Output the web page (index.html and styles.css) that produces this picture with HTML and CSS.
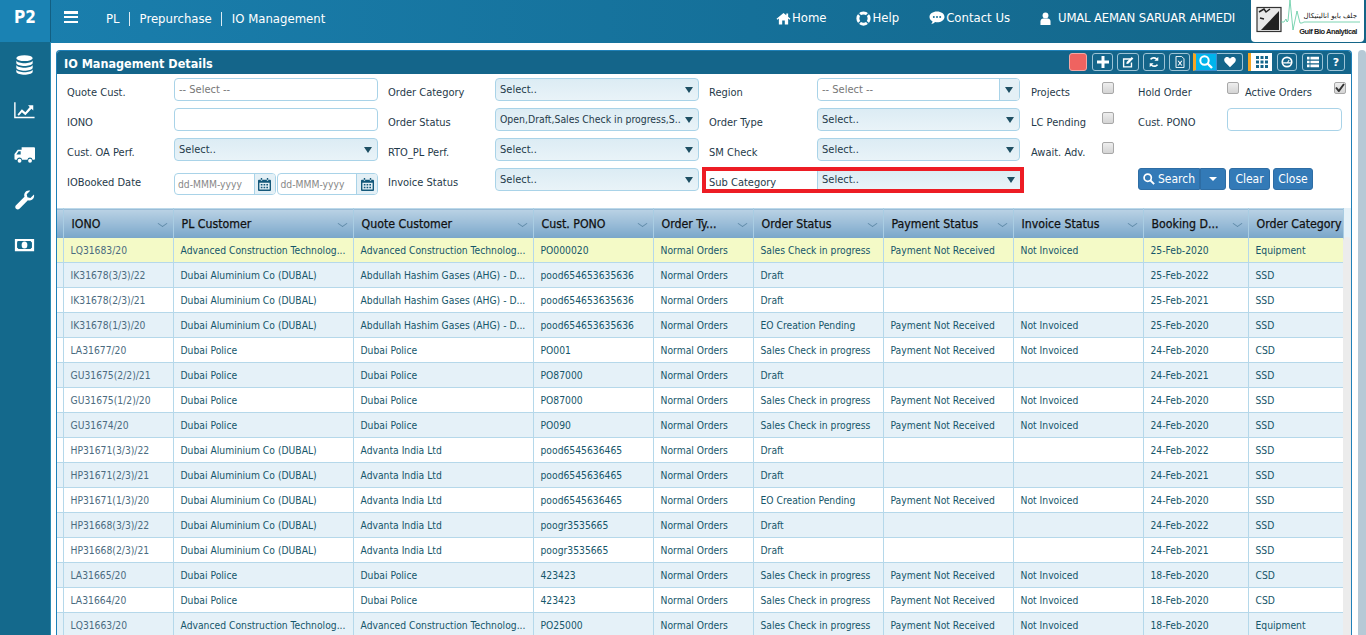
FILE: index.html
```html
<!DOCTYPE html>
<html lang="en">
<head>
<meta charset="utf-8">
<title>IO Management</title>
<link rel="stylesheet" href="styles.css">
</head>
<body>
<header class="topbar">
  <div class="brand">P2</div>
  <button class="burger" aria-label="Menu"><span></span><span></span><span></span></button>
  <nav class="crumbs"><span>PL</span><i></i><span>Prepurchase</span><i></i><span>IO Management</span></nav>
  <nav class="links">
    <a class="lk lk-home"><svg viewBox="0 0 16 14"><path d="M8 1 0.5 7.400l.9 1L3 7v6.500h3.600V9.200h2.800v4.300H13V7l1.600 1.400.9-1L13 5.200V1.600h-2v1.900z"/></svg>Home</a>
    <a class="lk lk-help"><svg viewBox="0 0 16 16"><circle cx="8" cy="8" r="6" fill="none" stroke="#fff" stroke-width="3.200"/><path d="M3 1.800 6 5 5 6 1.800 3zM13 1.800 10 5l1 1 3.200-3zM3 14.200 6 11l-1-1-3.200 3zM13 14.200 10 11l1-1 3.200 3z" fill="#14709a"/></svg>Help</a>
    <a class="lk lk-contact"><svg viewBox="0 0 16 14"><path d="M8 .5c4.200 0 7.500 2.400 7.500 5.400S12.200 11.300 8 11.300c-.7 0-1.300 0-1.900-.2C5 12.200 3.500 13 2 13.200c.9-.8 1.400-1.800 1.500-3C1.600 9.300.5 7.700.5 5.900.5 2.900 3.800.500 8 .500z"/><circle cx="4.800" cy="5.900" r="1" fill="#14709a"/><circle cx="8" cy="5.900" r="1" fill="#14709a"/><circle cx="11.200" cy="5.900" r="1" fill="#14709a"/></svg>Contact Us</a>
    <a class="lk lk-user"><svg viewBox="0 0 12 14"><circle cx="6" cy="3.600" r="3.200"/><path d="M.5 14V10.500C.5 8.300 2 7 3.500 7h5c1.500 0 3 1.300 3 3.500V14z"/></svg><span class="uname">UMAL AEMAN SARUAR AHMEDI</span></a>
  </nav>
  <div class="logo">
    <svg class="logo-mark" viewBox="0 0 113 42">
      <rect x="6" y="7.500" width="24" height="24" fill="#e8e8e8" stroke="#333" stroke-width="1.200"/>
      <path d="M10 30 28 11v19z" fill="#222"/>
      <path d="M8 12l5-3 2 3 4-3M9 18l4 1M21 23l5 3" stroke="#222" stroke-width="1.500" fill="none"/>
      <path d="M30 22h3l2-3 1 3 1-1 2-21 3 30 4-19 3 12h2l2-1h56" stroke="#5cc9a0" stroke-width=".8" fill="none"/>
    </svg>
    <span class="logo-ar">جلف بايو اناليتيكال</span>
    <span class="logo-en">Gulf Bio Analytical</span>
  </div>
</header>

<div class="shell">
  <aside class="side">
    <svg viewBox="0 0 20 22"><ellipse cx="10" cy="3.500" rx="9" ry="3.200"/><path d="M1 6c1 2 5 3 9 3s8-1 9-3v3.200c-1 2-5 3-9 3s-8-1-9-3zM1 11c1 2 5 3 9 3s8-1 9-3v3.200c-1 2-5 3-9 3s-8-1-9-3zM1 16c1 2 5 3 9 3s8-1 9-3v2.700c-1 2-5 3-9 3s-8-1-9-3z"/></svg>
    <svg viewBox="0 0 24 20"><path d="M1 1v17.500h22.500" fill="none" stroke="#fff" stroke-width="1.600"/><path d="M4 15l5-6 4 3.500 5-6-2-2h6v6l-2-2-7 7.500-4-3.500-3.500 4z"/></svg>
    <svg viewBox="0 0 22 18"><path d="M8 1h13a1 1 0 0 1 1 1v11a1 1 0 0 1-1 1h-1.500a2.800 2.800 0 0 0-5.500 0H8.500a2.800 2.800 0 0 0-5.500 0H1.500a1 1 0 0 1-1-1V8l3.500-4.500H8zM2.500 8.500H7v-3.500H4.800z"/><circle cx="5.800" cy="15" r="2"/><circle cx="16.800" cy="15" r="2"/></svg>
    <svg viewBox="0 0 20 20"><path d="M19.500 4.500c.5 2.200-.2 4.200-2 5.300-1.300.8-2.800.9-4.100.4L5 18.700c-1 1-2.500 1-3.500 0s-1-2.500 0-3.500l8.500-8.400c-.5-1.300-.4-2.800.4-4.100C11.500.9 13.500.2 15.700.7l-3.500 3.500.7 3 3 .7z"/></svg>
    <svg viewBox="0 0 24 16"><path fill-rule="evenodd" d="M1 1h22v14H1zM4 3.500A2 2 0 0 1 3.500 5v6A2 2 0 0 1 5 12.500h14a2 2 0 0 1 1.500-1.500V5A2 2 0 0 1 19 3.500z"/><ellipse cx="12" cy="8" rx="3.300" ry="4"/></svg>
  </aside>

  <main class="panel">
    <div class="panel-head">
      <h1>IO Management Details</h1>
      <div class="tools">
        <span class="tb tb-red"></span>
        <span class="tb tb-plus"><svg viewBox="0 0 12 12"><path d="M4.500 0h3v4.500H12v3H7.500V12h-3V7.500H0v-3h4.500z"/></svg></span>
        <span class="tb tb-w22"><svg viewBox="0 0 13 13"><path d="M1 2.500h8v1.500H2.500v7h7V7H11v5.500H1z"/><path d="M5 6.500 10.500 1l1.800 1.800L6.800 8.300 4.700 8.700z"/></svg></span>
        <span class="tb tb-w22"><svg viewBox="0 0 14 14"><path d="M12 1v4.500H7.500l1.700-1.700C7.500 2.600 5 3 3.800 4.500L2.200 3.500C4 .8 7.800.2 10.500 2.500zM2 13V8.500h4.500l-1.700 1.700c1.700 1.200 4.200.8 5.400-.7l1.600 1c-1.800 2.700-5.600 3.300-8.300 1z"/></svg></span>
        <span class="tb tb-w21"><svg viewBox="0 0 12 15"><path d="M1 .5h7l3 3v11H1z" fill="none" stroke="#fff" stroke-width="1.200"/><path d="M3 6l1.500 0L6 8l1.500-2H9L6.800 9 9 12H7.500L6 10l-1.500 2H3l2.200-3z"/></svg></span>
        <div class="tgroup">
          <span class="tb tb-on"><svg viewBox="0 0 14 14"><circle cx="5.500" cy="5.500" r="4.200" fill="none" stroke="#fff" stroke-width="2"/><path d="M8.500 8.500 13 13" stroke="#fff" stroke-width="2.400"/></svg></span>
          <span class="tb tb-heart"><svg viewBox="0 0 14 13"><path d="M7 12.500 1.200 6.700C-.4 5 .1 2.300 1.700 1.300 3.500.2 5.700.8 7 2.600 8.300.8 10.500.2 12.300 1.300c1.600 1 2.100 3.700.5 5.400z"/></svg></span>
        </div>
        <span class="tb tb-grid"><svg viewBox="0 0 12 12"><path d="M0 0h3v3H0zM4.500 0h3v3h-3zM9 0h3v3H9zM0 4.500h3v3H0zM4.500 4.500h3v3h-3zM9 4.500h3v3H9zM0 9h3v3H0zM4.500 9h3v3h-3zM9 9h3v3H9z"/></svg></span>
        <span class="tb tb-dash"><svg viewBox="0 0 14 14"><circle cx="7" cy="7" r="5.500" fill="none" stroke="#fff" stroke-width="2"/><path d="M2.500 7.300h9v1.500h-9zM7 7.500l2-3 1 .6-2 3z"/></svg></span>
        <span class="tb tb-list"><svg viewBox="0 0 14 12"><path d="M0 0h3v3H0zM4 0h10v3H4zM0 4.500h3v3H0zM4 4.500h10v3H4zM0 9h3v3H0zM4 9h10v3H4z"/></svg></span>
        <span class="tb tb-q">?</span>
      </div>
    </div>

    <form class="filters">
      <label class="lb">Quote Cust.</label>
      <div class="inp ph">-- Select --</div>
      <label class="lb lb-g">Order Category</label>
      <div class="sel">Select..</div>
      <label class="lb lb-g">Region</label>
      <div class="inp ph combo">-- Select --<span class="combo-btn"></span></div>
      <label class="lb lb-p">Projects</label>
      <span class="cb"></span>
      <label class="lb">Hold Order</label>
      <span class="cb"></span>
      <label class="lb">Active Orders</label>
      <span class="cb cb-on"><svg viewBox="0 0 10 9"><path d="M1 4.500 3.800 8 9 1" fill="none" stroke="#333" stroke-width="2"/></svg></span>

      <label class="lb">IONO</label>
      <div class="inp"></div>
      <label class="lb lb-g">Order Status</label>
      <div class="sel sel-long">Open,Draft,Sales Check in progress,S..</div>
      <label class="lb lb-g">Order Type</label>
      <div class="sel">Select..</div>
      <label class="lb lb-p">LC Pending</label>
      <span class="cb"></span>
      <label class="lb">Cust. PONO</label>
      <div class="inp inp-pono"></div>

      <label class="lb">Cust. OA Perf.</label>
      <div class="sel">Select..</div>
      <label class="lb lb-g">RTO_PL Perf.</label>
      <div class="sel">Select..</div>
      <label class="lb lb-g">SM Check</label>
      <div class="sel">Select..</div>
      <label class="lb lb-p">Await. Adv.</label>
      <span class="cb"></span>
      <span class="blank"></span>

      <label class="lb">IOBooked Date</label>
      <div class="dates">
        <div class="date"><span>dd-MMM-yyyy</span><b><svg viewBox="0 0 14 14"><path fill-rule="evenodd" d="M1 2h12a1 1 0 0 1 1 1v10a1 1 0 0 1-1 1H1a1 1 0 0 1-1-1V3a1 1 0 0 1 1-1zM1.500 5v7.500h11V5zM3 0h1.500v3H3zM9.500 0H11v3H9.500z"/><path d="M3 6.500h1.800v1.500H3zM6 6.500h1.800v1.500H6zM9 6.500h1.800v1.500H9zM3 9.500h1.800V11H3zM6 9.500h1.800V11H6zM9 9.500h1.800V11H9z"/></svg></b></div>
        <div class="date"><span>dd-MMM-yyyy</span><b><svg viewBox="0 0 14 14"><path fill-rule="evenodd" d="M1 2h12a1 1 0 0 1 1 1v10a1 1 0 0 1-1 1H1a1 1 0 0 1-1-1V3a1 1 0 0 1 1-1zM1.500 5v7.500h11V5zM3 0h1.500v3H3zM9.500 0H11v3H9.500z"/><path d="M3 6.500h1.800v1.500H3zM6 6.500h1.800v1.500H6zM9 6.500h1.800v1.500H9zM3 9.500h1.800V11H3zM6 9.500h1.800V11H6zM9 9.500h1.800V11H9z"/></svg></b></div>
      </div>
      <label class="lb lb-g">Invoice Status</label>
      <div class="sel">Select..</div>
      <div class="hl"><label class="hl-lb">Sub Category</label><div class="sel hl-sel">Select..</div></div>
      <span class="blank2"></span>
      <div class="actions">
        <button type="button" class="btn btn-search"><svg viewBox="0 0 14 14"><circle cx="5.500" cy="5.500" r="4.200" fill="none" stroke="#fff" stroke-width="2"/><path d="M8.500 8.500 13 13" stroke="#fff" stroke-width="2.200"/></svg>Search</button><button type="button" class="btn btn-caret"><i></i></button>
        <button type="button" class="btn btn-clear">Clear</button>
        <button type="button" class="btn btn-close">Close</button>
      </div>
    </form>

    <div class="grid-wrap">
      <table class="grid">
        <colgroup><col class="c0"><col class="c1"><col class="c2"><col class="c3"><col class="c4"><col class="c5"><col class="c6"><col class="c7"><col class="c8"><col class="c9"><col class="c10"></colgroup>
        <thead><tr>
          <th></th>
          <th class="srt">IONO</th><th class="srt">PL Customer</th><th class="srt">Quote Customer</th><th class="srt">Cust. PONO</th><th class="srt">Order Ty...</th><th class="srt">Order Status</th><th class="srt">Payment Status</th><th class="srt">Invoice Status</th><th class="srt">Booking D...</th><th>Order Category</th>
        </tr></thead>
        <tbody>
          <tr class="on"><td></td><td class="id">LQ31683/20</td><td>Advanced Construction Technolog...</td><td>Advanced Construction Technolog...</td><td>PO000020</td><td>Normal Orders</td><td>Sales Check in progress</td><td>Payment Not Received</td><td>Not Invoiced</td><td>25-Feb-2020</td><td>Equipment</td></tr>
          <tr class="alt"><td></td><td class="id">IK31678(3/3)/22</td><td>Dubai Aluminium Co (DUBAL)</td><td>Abdullah Hashim Gases (AHG) - D...</td><td>pood654653635636</td><td>Normal Orders</td><td>Draft</td><td></td><td></td><td>25-Feb-2022</td><td>SSD</td></tr>
          <tr><td></td><td class="id">IK31678(2/3)/21</td><td>Dubai Aluminium Co (DUBAL)</td><td>Abdullah Hashim Gases (AHG) - D...</td><td>pood654653635636</td><td>Normal Orders</td><td>Draft</td><td></td><td></td><td>25-Feb-2021</td><td>SSD</td></tr>
          <tr class="alt"><td></td><td class="id">IK31678(1/3)/20</td><td>Dubai Aluminium Co (DUBAL)</td><td>Abdullah Hashim Gases (AHG) - D...</td><td>pood654653635636</td><td>Normal Orders</td><td>EO Creation Pending</td><td>Payment Not Received</td><td>Not Invoiced</td><td>25-Feb-2020</td><td>SSD</td></tr>
          <tr><td></td><td class="id">LA31677/20</td><td>Dubai Police</td><td>Dubai Police</td><td>PO001</td><td>Normal Orders</td><td>Sales Check in progress</td><td>Payment Not Received</td><td>Not Invoiced</td><td>24-Feb-2020</td><td>CSD</td></tr>
          <tr class="alt"><td></td><td class="id">GU31675(2/2)/21</td><td>Dubai Police</td><td>Dubai Police</td><td>PO87000</td><td>Normal Orders</td><td>Draft</td><td></td><td></td><td>24-Feb-2021</td><td>SSD</td></tr>
          <tr><td></td><td class="id">GU31675(1/2)/20</td><td>Dubai Police</td><td>Dubai Police</td><td>PO87000</td><td>Normal Orders</td><td>Sales Check in progress</td><td>Payment Not Received</td><td>Not Invoiced</td><td>24-Feb-2020</td><td>SSD</td></tr>
          <tr class="alt"><td></td><td class="id">GU31674/20</td><td>Dubai Police</td><td>Dubai Police</td><td>PO090</td><td>Normal Orders</td><td>Sales Check in progress</td><td>Payment Not Received</td><td>Not Invoiced</td><td>24-Feb-2020</td><td>SSD</td></tr>
          <tr><td></td><td class="id">HP31671(3/3)/22</td><td>Dubai Aluminium Co (DUBAL)</td><td>Advanta India Ltd</td><td>pood6545636465</td><td>Normal Orders</td><td>Draft</td><td></td><td></td><td>24-Feb-2022</td><td>SSD</td></tr>
          <tr class="alt"><td></td><td class="id">HP31671(2/3)/21</td><td>Dubai Aluminium Co (DUBAL)</td><td>Advanta India Ltd</td><td>pood6545636465</td><td>Normal Orders</td><td>Draft</td><td></td><td></td><td>24-Feb-2021</td><td>SSD</td></tr>
          <tr><td></td><td class="id">HP31671(1/3)/20</td><td>Dubai Aluminium Co (DUBAL)</td><td>Advanta India Ltd</td><td>pood6545636465</td><td>Normal Orders</td><td>EO Creation Pending</td><td>Payment Not Received</td><td>Not Invoiced</td><td>24-Feb-2020</td><td>SSD</td></tr>
          <tr class="alt"><td></td><td class="id">HP31668(3/3)/22</td><td>Dubai Aluminium Co (DUBAL)</td><td>Advanta India Ltd</td><td>poogr3535665</td><td>Normal Orders</td><td>Draft</td><td></td><td></td><td>24-Feb-2022</td><td>SSD</td></tr>
          <tr><td></td><td class="id">HP31668(2/3)/21</td><td>Dubai Aluminium Co (DUBAL)</td><td>Advanta India Ltd</td><td>poogr3535665</td><td>Normal Orders</td><td>Draft</td><td></td><td></td><td>24-Feb-2021</td><td>SSD</td></tr>
          <tr class="alt"><td></td><td class="id">LA31665/20</td><td>Dubai Police</td><td>Dubai Police</td><td>423423</td><td>Normal Orders</td><td>Sales Check in progress</td><td>Payment Not Received</td><td>Not Invoiced</td><td>18-Feb-2020</td><td>CSD</td></tr>
          <tr><td></td><td class="id">LA31664/20</td><td>Dubai Police</td><td>Dubai Police</td><td>423423</td><td>Normal Orders</td><td>Sales Check in progress</td><td>Payment Not Received</td><td>Not Invoiced</td><td>18-Feb-2020</td><td>CSD</td></tr>
          <tr class="alt"><td></td><td class="id">LQ31663/20</td><td>Advanced Construction Technolog...</td><td>Advanced Construction Technolog...</td><td>PO25000</td><td>Normal Orders</td><td>Sales Check in progress</td><td>Payment Not Received</td><td>Not Invoiced</td><td>18-Feb-2020</td><td>Equipment</td></tr>
        </tbody>
      </table>
      <div class="vscroll"></div>
    </div>
  </main>
  <div class="page-scroll"></div>
</div>
</body>
</html>
```

FILE: styles.css
```css
* { box-sizing: border-box; }
html, body { margin: 0; height: 635px; overflow: hidden; }
body {
  font-family: "DejaVu Sans Condensed", "DejaVu Sans", sans-serif;
  font-stretch: condensed;
  font-size: 11px;
  color: #1f3a4a;
  background: #fff;
  display: flex;
  flex-direction: column;
}

/* top bar */
.topbar {
  height: 43px;
  flex: none;
  display: flex;
  align-items: flex-start;
  color: #fff;
  background: linear-gradient(90deg, #1a7fae 0%, #157099 55%, #146587 100%);
}
.brand {
  width: 51px;
  height: 42px;
  background: #1a82b3;
  border-right: 1px solid #125f82;
  font: bold 17px/35px "DejaVu Sans Condensed", "DejaVu Sans", sans-serif;
  text-align: center;
}
.burger {
  width: 14px;
  height: 12px;
  margin: 11px 0 0 13px;
  padding: 0;
  border: 0;
  background: none;
  display: flex;
  flex-direction: column;
  justify-content: space-between;
}
.burger span { display: block; height: 2.500px; background: #fff; }
.crumbs {
  display: flex;
  align-items: center;
  margin: 11px 0 0 28px;
  font-size: 13px;
  line-height: 15px;
}
.crumbs i { width: 1px; height: 14px; background: #dcebf3; margin: 0 10px 0 9px; }
.links {
  display: flex;
  align-items: center;
  margin: 10px 0 0 auto;
  font-size: 13px;
  line-height: 16px;
}
.lk { display: flex; align-items: center; }
.lk svg { fill: #fff; margin-right: 1px; }
.lk-home svg { width: 15px; height: 13px; }
.lk-help { margin-left: 30px; }
.lk-help svg { width: 15px; height: 15px; }
.lk-contact { margin-left: 30px; }
.lk-contact svg { width: 16px; height: 14px; }
.lk-user { margin-left: 30px; }
.lk-user svg { width: 11px; height: 13px; margin-right: 7px; }
.uname { letter-spacing: -.2px; }
.logo {
  position: relative;
  width: 113px;
  height: 42px;
  margin: 0 2px 0 16px;
  background: #fff;
  border-radius: 0 0 4px 4px;
  color: #222;
}
.logo-mark { position: absolute; left: 0; top: 0; width: 113px; height: 42px; }
.logo-ar {
  position: absolute; right: 7px; top: 12px;
  font: 7px/9px "DejaVu Sans", sans-serif;
  background: #fff;
}
.logo-en {
  position: absolute; right: 7px; top: 27px;
  font: bold 7.500px/9px "Liberation Sans", sans-serif;
  letter-spacing: -.45px;
}

/* shell */
.shell { flex: 1; display: flex; min-height: 0; position: relative; }
.side {
  width: 51px;
  flex: none;
  margin-top: -1px;
  background: #14698c;
  border-right: 1px solid #2a88b0;
  display: flex;
  flex-direction: column;
  align-items: center;
  padding-top: 13px;
  gap: 25px;
}
.side svg { width: 22px; height: 20px; fill: #fff; display: block; padding-right: 1px; }

/* panel */
.panel {
  width: 1296px;
  flex: none;
  margin: 7px 0 0 5px;
  border: 1px solid #1f80b8;
  border-bottom: 0;
  border-radius: 4px 4px 0 0;
  background: #fff;
  overflow: hidden;
}
.panel-head {
  height: 23px;
  background: #14658a;
  display: flex;
  align-items: center;
  justify-content: space-between;
  padding: 0 6px 0 7px;
}
.panel-head h1 {
  margin: 1px 0 0;
  color: #fff;
  font-size: 12.500px;
  font-weight: bold;
  font-stretch: condensed;
}
.tools { display: flex; align-items: center; margin-top: -1px; }
.tb {
  display: flex;
  align-items: center;
  justify-content: center;
  height: 18px;
  border: 1px solid #9dc3d6;
  border-radius: 3px;
  margin-left: 4px;
  color: #fff;
}
.tb svg { fill: #fff; width: 12px; height: 12px; }
.tb-red { width: 18px; background: #ef6360; margin-left: 0; border-color: #f4a7a5; }
.tb-plus { width: 21px; margin-left: 5px; }
.tb-w21 { width: 21px; }
.tb-w22 { width: 22px; }
.tb-dash { width: 20px; margin-left: 5px; }
.tb-list { width: 21px; margin-left: 5px; }
.tb-q { width: 18px; font: bold 11px "DejaVu Sans", sans-serif; }
.tgroup { display: flex; margin-left: 3px; }
.tgroup .tb { margin-left: 0; }
.tb-on {
  width: 24px;
  background: #00b4ec;
  border: 1px solid #3b8fd0;
  border-left: 3px solid #f5a623;
  border-radius: 0;
}
.tb-on svg { width: 14px; height: 14px; }
.tb-heart { width: 26px; border-left: 0; border-radius: 0 3px 3px 0; }
.tb-grid {
  width: 24px;
  margin-left: 5px;
  background: #fff;
  border: 0;
  border-left: 3px solid #f5a623;
  border-radius: 0;
}
.tb-grid svg { fill: #14658a; }

/* filters */
.filters {
  display: grid;
  grid-template-columns: 107px 204px 117px 204px 118px 203px 82px 36px 89px 18px 89px 18px;
  grid-auto-rows: 30px;
  padding: 4px 0 10px 10px;
  height: 134px;
}
.lb {
  padding-top: 8px;
  line-height: 14px;
  color: #1f3a4a;
  white-space: nowrap;
}
.lb-g { padding-left: 10px; }
.lb-p { padding-left: 11px; }
.inp, .sel {
  height: 23px;
  border: 1px solid #a9d3e8;
  border-radius: 4px;
  padding-left: 4px;
  color: #1f3a4a;
  position: relative;
  white-space: nowrap;
  overflow: hidden;
}
.inp { background: #fff; }
.ph { color: #777; line-height: 22px; }
.sel {
  background: linear-gradient(#dcecf4, #e9f3f8);
  line-height: 21px;
  padding-right: 16px;
}
.sel-long { font-size: 10.400px; }
.sel::after, .combo-btn::after {
  content: "";
  position: absolute;
  top: 8px;
  right: 5px;
  border: 4px solid transparent;
  border-top: 6px solid #1e4f63;
  border-bottom: 0;
}
.combo-btn {
  position: absolute;
  right: 0; top: 0; bottom: 0;
  width: 20px;
  background: #e4f0f6;
  border-left: 1px solid #a9d3e8;
}
.combo-btn::after { right: 6px; }
.inp-pono { grid-column: span 3; width: 115px; }
.cb {
  width: 12px;
  height: 12px;
  margin-top: 4px;
  border: 1px solid #a8a8a8;
  border-radius: 2px;
  background: linear-gradient(#eee, #d4d4d4);
  position: relative;
}
.cb-on svg { position: absolute; left: 0; top: 0; width: 10px; height: 9px; }
.blank { grid-column: span 4; }
.blank2 { grid-column: span 2; }
.dates { display: flex; gap: 1px; margin-top: 5px; height: 22px; }
.date {
  flex: 1;
  height: 22px;
  display: flex;
  border: 1px solid #a9d3e8;
  border-radius: 4px;
  overflow: hidden;
  color: #888;
  font-size: 10.250px;
}
.date span { flex: 1; padding-left: 3px; line-height: 21px; white-space: nowrap; }
.date b {
  width: 21px;
  flex: none;
  background: #e4f0f6;
  border-left: 1px solid #a9d3e8;
  display: flex;
  align-items: center;
  justify-content: center;
}
.date svg { width: 13px; height: 13px; fill: #14587a; }
.hl {
  grid-column: span 2;
  display: flex;
  height: 18px;
  margin: 3px 0 0 7px;
  padding-left: 3px;
  outline: 4px solid #ed1c24;
  background: #fff;
}
.hl-lb { width: 108px; padding-top: 5px; flex: none; line-height: 14px; color: #1f3a4a; }
.hl-sel { flex: 1; height: 18px; border: 0; border-left: 1px solid #a9d3e8; border-radius: 0; line-height: 17px; }
.hl-sel::after { top: 6px; }
.actions { grid-column: span 4; display: flex; height: 22px; color: #fff; }
.btn {
  height: 22px;
  padding: 0;
  border: 1px solid #2e6da4;
  border-radius: 3px;
  background: #337ab7;
  color: #fff;
  font: inherit;
  font-size: 12px;
  font-stretch: condensed;
}
.btn-search {
  width: 62px;
  flex: none;
  border-radius: 3px 0 0 3px;
  display: flex;
  align-items: center;
  justify-content: center;
  gap: 3px;
}
.btn-search svg { width: 12px; height: 12px; }
.btn-caret { width: 26px; flex: none; border-radius: 0 3px 3px 0; display: flex; align-items: center; justify-content: center; }
.btn-caret i { border: 4px solid transparent; border-top: 4px solid #fff; border-bottom: 0; display: block; }
.btn-clear { width: 41px; flex: none; margin-left: 3px; }
.btn-close { width: 40px; flex: none; margin-left: 3px; }

/* data grid */
.grid-wrap {
  position: relative;
  height: 440px;
  overflow: hidden;
  background: #e5f1f8;
  width: 1294px;
}
.grid {
  width: 1286px;
  table-layout: fixed;
  border-collapse: collapse;
  font-size: 10.250px;
}
.c0 { width: 6px; }
.c1 { width: 110px; }
.c2 { width: 180px; }
.c3 { width: 180px; }
.c4 { width: 120px; }
.c5 { width: 100px; }
.c6 { width: 130px; }
.c7 { width: 130px; }
.c8 { width: 130px; }
.c9 { width: 105px; }
.c10 { width: 95px; }
.grid th {
  height: 29px;
  padding: 1px 0 0 8px;
  text-align: left;
  font-size: 12.250px;
  font-weight: normal;
  color: #111;
  -webkit-text-stroke: .25px #111;
  white-space: nowrap;
  overflow: hidden;
  background: linear-gradient(#bad2e5, #79a6c9);
  border-right: 1px solid #a9cde3;
  border-top: 1px solid #bcd9ea;
  position: relative;
}
.srt::after {
  content: "";
  position: absolute;
  right: 7px;
  top: 11px;
  width: 6px;
  height: 6px;
  border-right: 1px solid #5f8aa8;
  border-bottom: 1px solid #5f8aa8;
  transform: scaleY(.7) rotate(45deg);
}
.grid td {
  height: 25px;
  padding: 0 0 0 7px;
  white-space: nowrap;
  overflow: hidden;
  color: #15566a;
  background: #fff;
  border-right: 1px solid #b5d8ea;
  border-bottom: 1px solid #b5d8ea;
}
.grid td.id { color: #4b6b80; }
.grid tr.alt td { background: #e5f1f8; }
.grid tr.on td { background: #f4fac7; }
.vscroll {
  position: absolute;
  right: 0;
  top: 29px;
  bottom: 0;
  width: 8px;
  background: #ececec;
  border-radius: 4px 4px 0 0;
}
.page-scroll {
  position: absolute;
  right: 0;
  top: 7px;
  bottom: 0;
  width: 8px;
  background: #b6c9d6;
  border-radius: 4px 4px 0 0;
}
```
